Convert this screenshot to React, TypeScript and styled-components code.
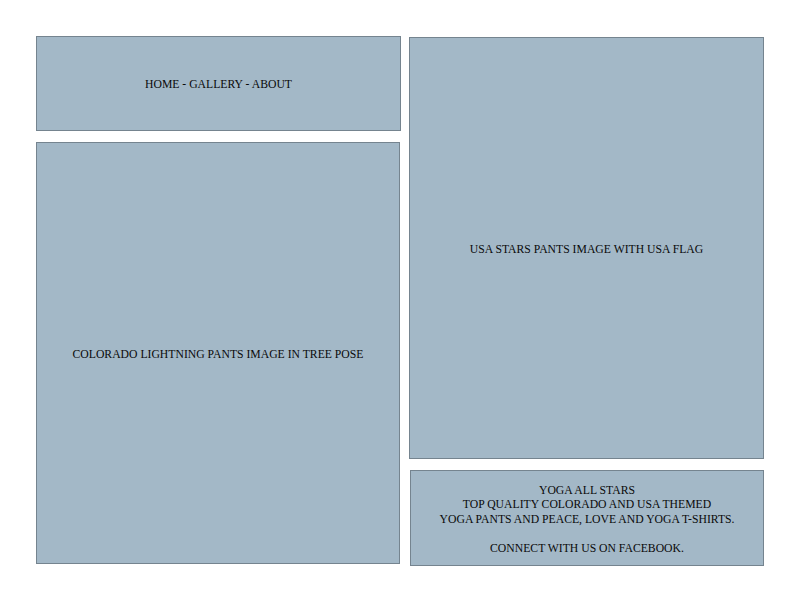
import styled, { createGlobalStyle } from 'styled-components';

const GlobalStyle = createGlobalStyle`
  html, body {
    margin: 0;
    padding: 0;
    background: #ffffff;
  }
  body {
    font-family: 'Liberation Serif', 'Times New Roman', serif;
    color: #0a0a0a;
  }
`;

const Page = styled.div`
  display: grid;
  grid-template-columns: 365px 355px;
  column-gap: 8px;
  padding: 36px 0 0 36px;
`;

const Column = styled.div<{ $offset?: number }>`
  display: flex;
  flex-direction: column;
  gap: 11px;
  padding-top: ${({ $offset }) => $offset || 0}px;
`;

const Panel = styled.div<{ $height: number; $width?: number; $shift?: number }>`
  box-sizing: border-box;
  height: ${({ $height }) => $height}px;
  width: ${({ $width }) => ($width ? `${$width}px` : '100%')};
  margin-left: ${({ $shift }) => $shift || 0}px;
  padding-top: 4px;
  background: #a3b8c7;
  border: 1px solid #75848f;
  display: flex;
  align-items: center;
  justify-content: center;
  text-align: center;
  font-size: 11.7px;
  line-height: 14.5px;
  text-transform: uppercase;
`;

const Info = styled.div`
  display: flex;
  flex-direction: column;
  align-items: center;
`;

const Spacer = styled.div`
  height: 14.5px;
`;

const App = () => {
  return (
    <>
      <GlobalStyle />
      <Page>
        <Column>
          <Panel $height={95}>
            <nav>Home - Gallery - About</nav>
          </Panel>
          <Panel $height={422} $width={364}>
            Colorado Lightning Pants Image in Tree Pose
          </Panel>
        </Column>
        <Column $offset={1}>
          <Panel $height={422}>USA Stars Pants Image with USA Flag</Panel>
          <Panel $height={96} $width={354} $shift={1}>
            <Info>
              <span>Yoga All Stars</span>
              <span>Top Quality Colorado and USA Themed</span>
              <span>Yoga Pants and Peace, Love and Yoga T-Shirts.</span>
              <Spacer />
              <span>Connect with us on Facebook.</span>
            </Info>
          </Panel>
        </Column>
      </Page>
    </>
  );
};

export default App;
